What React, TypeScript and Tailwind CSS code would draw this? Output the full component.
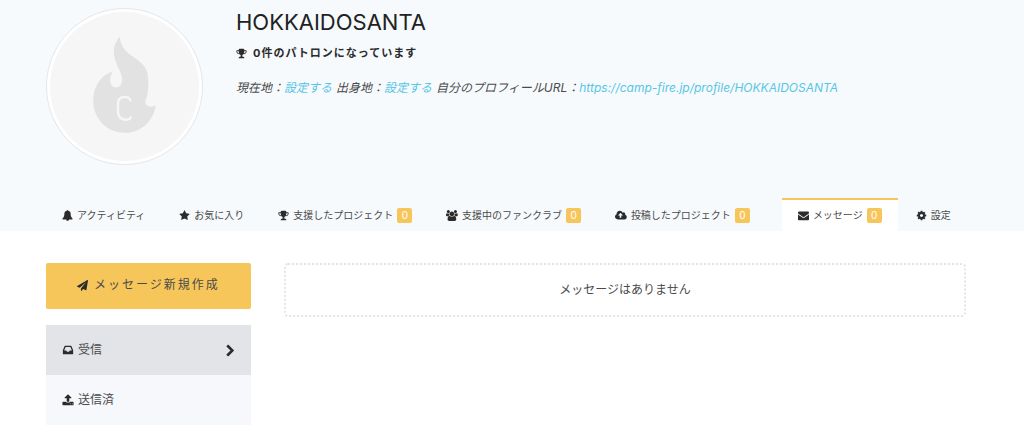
import type { ReactNode } from 'react';

interface IconProps {
  path: string;
  width?: number;
  className?: string;
}

const icons = {
  trophy:
    'M522 883q-74-162-74-371h-256v96q0 78 94.5 162t235.5 113zm1078-275v-96h-256q0 209-74 371 141-29 235.5-113t94.5-162zm128-128v128q0 71-41.5 143t-112 130-173 97.5-215.5 44.5q-42 54-95 95-38 34-52.5 72.5t-14.5 89.5q0 54 30.5 91t97.5 37q75 0 133.5 45.5t58.5 114.5v64q0 14-9 23t-23 9h-832q-14 0-23-9t-9-23v-64q0-69 58.5-114.5t133.5-45.5q67 0 97.5-37t30.5-91q0-51-14.5-89.5t-52.5-72.5q-53-41-95-95-113-5-215.5-44.5t-173-97.5-112-130-41.5-143v-128q0-40 28-68t68-28h288v-96q0-66 47-113t113-47h576q66 0 113 47t47 113v96h288q40 0 68 28t28 68z',
  star: 'M1728 647q0 22-26 48l-363 354 86 500q1 7 1 20 0 21-10.5 35.5t-30.5 14.5q-19 0-40-12l-449-236-449 236q-22 12-40 12-21 0-31.5-14.5t-10.5-35.5q0-6 2-20l86-500-364-354q-25-27-25-48 0-37 56-46l502-73 225-455q19-41 49-41t49 41l225 455 502 73q56 9 56 46z',
  envelope:
    'M1792 710v794q0 66-47 113t-113 47h-1472q-66 0-113-47t-47-113v-794q44 49 101 87 362 246 497 345 57 42 92.5 65.5t94.5 48 110 24.5h2q51 0 110-24.5t94.5-48 92.5-65.5q170-123 498-345 57-39 100-87zm0-294q0 79-49 151t-122 123q-376 261-468 325-10 7-42.5 31t-54 38.5-52 32.5-57.5 27-50 9h-2q-23 0-50-9t-57.5-27-52-32.5-54-38.5-42.5-31q-91-64-262-182.5t-205-142.5q-62-42-117-115.5t-55-136.5q0-78 41.5-130t118.5-52h1472q65 0 112.5 47t47.5 113z',
  plane:
    'M1764 11q33 24 27 64l-256 1536q-5 29-32 45-14 8-31 8-11 0-24-5l-453-185-242 295q-18 23-49 23-13 0-22-4-19-7-30.5-23.5t-11.5-36.5v-349l864-1059-1069 925-395-162q-37-14-40-55-2-40 32-59l1664-960q15-9 32-9 20 0 36 11z',
  inbox:
    'M1151 960h316q-1-3-2.5-8t-2.5-8l-212-496h-708l-212 496q-1 2-2.5 8t-2.5 8h316l95 192h320zm513 30v482q0 26-19 45t-45 19h-1408q-26 0-45-19t-19-45v-482q0-62 25-123l238-552q10-25 36.5-42t52.5-17h832q26 0 52.5 17t36.5 42l238 552q25 61 25 123z',
  upload:
    'M1344 1472q0-26-19-45t-45-19-45 19-19 45 19 45 45 19 45-19 19-45zm256 0q0-26-19-45t-45-19-45 19-19 45 19 45 45 19 45-19 19-45zm128-224v320q0 40-28 68t-68 28h-1472q-40 0-68-28t-28-68v-320q0-40 28-68t68-28h427q21 56 70.5 92t110.5 36h256q61 0 110.5-36t70.5-92h427q40 0 68 28t28 68zm-325-648q-17 40-59 40h-256v448q0 26-19 45t-45 19h-256q-26 0-45-19t-19-45v-448h-256q-42 0-59-40-17-39 14-69l448-448q18-19 45-19t45 19l448 448q31 30 14 69z',
  cog: 'M1152 896q0-106-75-181t-181-75-181 75-75 181 75 181 181 75 181-75 75-181zm512-109v222q0 12-8 23t-20 13l-185 28q-19 54-39 91 35 50 107 138 10 12 10 25t-9 23q-27 37-99 108t-94 71q-12 0-26-9l-138-108q-44 23-91 38-16 136-29 186-7 28-36 28h-222q-14 0-24.5-8.5t-11.5-21.5l-28-184q-49-16-90-37l-141 107q-10 9-25 9-14 0-25-11-126-114-165-168-7-10-7-23 0-12 8-23 15-21 51-66.5t54-70.5q-27-50-41-99l-183-27q-13-2-21-12.5t-8-23.5v-222q0-12 8-23t19-13l186-28q14-46 39-92-40-57-107-138-10-12-10-24 0-10 9-23 26-36 98.5-107.5t94.5-71.5q13 0 26 10l138 107q44-23 91-38 16-136 29-186 7-28 36-28h222q14 0 24.5 8.5t11.5 21.5l28 184q49 16 90 37l142-107q9-9 24-9 13 0 25 10 129 119 165 170 7 8 7 22 0 12-8 23-15 21-51 66.5t-54 70.5q26 50 41 98l183 28q13 2 21 12.5t8 23.5z',
  chevron:
    'M1363 941l-742 742q-19 19-45 19t-45-19l-166-166q-19-19-19-45t19-45l531-531-531-531q-19-19-19-45t19-45l166-166q19-19 45-19t45 19l742 742q19 19 19 45t-19 45z',
  cloud:
    'M1280 864q0-14-9-23l-352-352q-9-9-23-9t-23 9l-351 351q-10 12-10 24 0 14 9 23t23 9h224v352q0 13 9.5 22.5t22.5 9.5h192q13 0 22.5-9.5t9.5-22.5v-352h224q13 0 22.5-9.5t9.5-22.5zm640 288q0 159-112.5 271.5t-271.5 112.5h-1088q-185 0-316.5-131.5t-131.5-316.5q0-130 70-240t188-165q-2-30-2-43 0-212 150-362t362-150q156 0 285.5 87t188.5 231q71-62 166-62 106 0 181 75t75 181q0 76-41 138 130 31 213.5 135.5t83.5 238.5z',
  bell: 'M912 1696q0-16-16-16-59 0-101.5-42.5t-42.5-101.5q0-16-16-16t-16 16q0 73 51.5 124.5t124.5 51.5q16 0 16-16zm816-288q0 52-38 90t-90 38h-448q0 106-75 181t-181 75-181-75-75-181h-448q-52 0-90-38t-38-90q50-42 91-88t85-119.5 74.5-158.5 50-206 19.5-260q0-152 117-282.5t307-158.5q-8-19-8-39 0-40 28-68t68-28 68 28 28 68q0 20-8 39 190 28 307 158.5t117 282.5q0 139 19.5 260t50 206 74.5 158.5 85 119.5 91 88z',
  users:
    'M593 896q-162 5-265 128h-134q-82 0-138-40.5t-56-118.5q0-353 124-353 6 0 43.5 21t97.5 42.5 119 21.5q67 0 133-23-5 37-5 66 0 159 81 256zm1071 637q0 120-73 189.5t-194 69.5h-874q-121 0-194-69.5t-73-189.5q0-53 3.5-103.5t14-109 26.5-108.5 43-97.5 62-81 85.5-53.5 111.5-20q10 0 43 21.5t73 48 107 48 135 21.5 135-21.5 107-48 73-48 43-21.5q61 0 111.5 20t85.5 53.5 62 81 43 97.5 26.5 108.5 14 109 3.5 103.5zm-1024-1277q0 106-75 181t-181 75-181-75-75-181 75-181 181-75 181 75 75 181zm704 384q0 159-112.5 271.5t-271.5 112.5-271.5-112.5-112.5-271.5 112.5-271.5 271.5-112.5 271.5 112.5 112.5 271.5zm576 225q0 78-56 118.5t-138 40.5h-134q-103-123-265-128 90-97 90-256 0-29-5-66 66 23 133 23 59 0 119-21.5t97.5-42.5 43.5-21q124 0 124 353zm-128-609q0 106-75 181t-181 75-181-75-75-181 75-181 181-75 181 75 75 181z',
};

function Icon({ path, width = 1792, className = 'h-[11px]' }: IconProps) {
  return (
    <svg
      viewBox={`0 0 ${width} 1792`}
      className={`w-auto shrink-0 fill-[#2b2b2b] ${className}`}
      aria-hidden="true"
    >
      <path d={path} />
    </svg>
  );
}

interface Tab {
  label: string;
  icon: string;
  iconWidth?: number;
  count?: number;
  active?: boolean;
}

const tabs: Tab[] = [
  { label: 'アクティビティ', icon: icons.bell },
  { label: 'お気に入り', icon: icons.star },
  { label: '支援したプロジェクト', icon: icons.trophy, count: 0 },
  { label: '支援中のファンクラブ', icon: icons.users, iconWidth: 1920, count: 0 },
  { label: '投稿したプロジェクト', icon: icons.cloud, iconWidth: 1920, count: 0 },
  { label: 'メッセージ', icon: icons.envelope, count: 0, active: true },
  { label: '設定', icon: icons.cog },
];

function Avatar() {
  return (
    <div className="w-[157px] h-[157px] shrink-0 rounded-full border border-[#e4e7ea] bg-white p-[3px]">
      <svg viewBox="0 0 150 150" className="w-full h-full rounded-full bg-[#f6f6f6]" role="img" aria-label="HOKKAIDOSANTA">
        <path
          fill="#e2e2e2"
          d="M70 25C65 31 63 38 65 46C67 54 71 59 72.500 66C73 72 71 76 66.500 76C60 76 59 68 63 60C51 64 43.500 75 43.500 89C43.500 107 57 121.500 75 121.500C92 121.500 104 110 106.500 93.500C102 97 96 95 96 90C98 85 99 79 99 71C99 59 96 54 88 48C79 42 72 38 70 25Z"
        />
        <path
          fill="none"
          stroke="#f6f6f6"
          strokeWidth="2.4"
          strokeLinecap="round"
          d="M81 89C80 84 68.500 84 68.500 92V101C68.500 109.500 80 110 81.500 106"
        />
      </svg>
    </div>
  );
}

function ProfileLink({ href, children }: { href: string; children: ReactNode }) {
  return (
    <a href={href} className="text-[#58c6e4]">
      {children}
    </a>
  );
}

export default function App() {
  return (
    <div className="min-h-screen bg-white text-[#4a4a4a] text-[12px] font-['Inter','Noto_Sans_CJK_JP',sans-serif]">
      <header className="bg-[#f6fafd] pl-[46px] pr-[58px] pt-2">
        <div className="flex gap-[33px]">
          <Avatar />
          <div>
            <h1 className="text-[22px] leading-7 font-normal text-[#222]">HOKKAIDOSANTA</h1>
            <p className="mt-[7px] flex items-center gap-[6px] text-[11px] leading-5 font-bold tracking-[1px] text-[#2b2b2b]">
              <Icon path={icons.trophy} />
              0件のパトロンになっています
            </p>
            <ul className="mt-4 flex gap-1 leading-[18px] italic whitespace-nowrap">
              <li>
                現在地：<ProfileLink href="#location">設定する</ProfileLink>
              </li>
              <li>
                出身地：<ProfileLink href="#hometown">設定する</ProfileLink>
              </li>
              <li>
                自分のプロフィールURL：
                <ProfileLink href="#profile">https://camp-fire.jp/profile/HOKKAIDOSANTA</ProfileLink>
              </li>
            </ul>
          </div>
        </div>

        <nav className="mt-[33px] flex gap-[2px] text-[10px]">
          {tabs.map((tab) => (
            <a
              key={tab.label}
              href="#"
              aria-current={tab.active ? 'page' : undefined}
              className={`flex h-[33px] items-center gap-1 border-t-2 px-4 whitespace-nowrap ${
                tab.active ? 'ml-[14px] border-[#f6c65b] bg-white' : 'border-transparent'
              }`}
            >
              <Icon path={tab.icon} width={tab.iconWidth} />
              {tab.label}
              {tab.count !== undefined && (
                <span className="flex h-[15px] w-[15px] items-center justify-center rounded-xs bg-[#f6c65b] text-white">
                  {tab.count}
                </span>
              )}
            </a>
          ))}
        </nav>
      </header>

      <div className="flex gap-[33px] pl-[46px] pr-[58px] pt-8">
        <aside className="w-[205px] shrink-0">
          <button
            type="button"
            className="flex h-[46px] w-full items-center justify-center gap-[6px] rounded-xs bg-[#f6c65b] pb-[2px] text-[12px] tracking-[2px]"
          >
            <Icon path={icons.plane} />
            メッセージ新規作成
          </button>
          <ul className="mt-4">
            <li>
              <a href="#inbox" className="flex h-[50px] items-center gap-1 bg-[#e2e4e8] pr-3.5 pl-4">
                <Icon path={icons.inbox} className="h-3" />
                受信
                <Icon path={icons.chevron} className="ml-auto h-[13px]" />
              </a>
            </li>
            <li>
              <a href="#sent" className="flex h-[50px] items-center gap-1 bg-[#f6f8fb] pr-3.5 pl-4">
                <Icon path={icons.upload} className="h-3" />
                送信済
              </a>
            </li>
          </ul>
        </aside>
        <main className="min-w-0 flex-1">
          <p className="rounded border-2 border-dotted border-[#e5e5e5] py-4 text-center leading-[18px]">
            メッセージはありません
          </p>
        </main>
      </div>
    </div>
  );
}
